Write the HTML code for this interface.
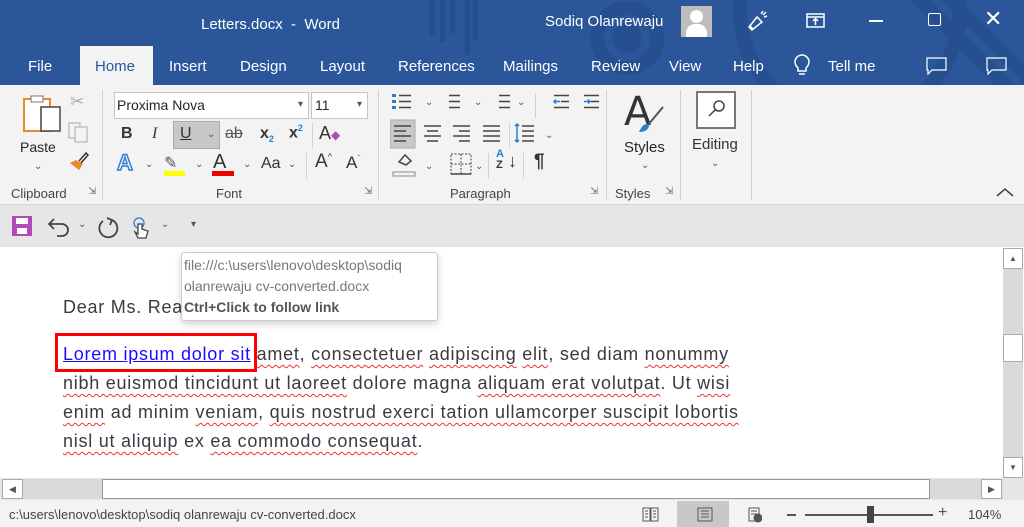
<!DOCTYPE html>
<html><head><meta charset="utf-8">
<style>
*{margin:0;padding:0;box-sizing:border-box}
body{width:1024px;height:527px;overflow:hidden;position:relative;font-family:"Liberation Sans","DejaVu Sans",sans-serif;background:#fff;color:#262626}
.a{position:absolute;white-space:nowrap}
.top{left:0;top:0;width:1024px;height:85px;background:#2b579a;overflow:hidden}
.w{color:#fff;font-size:15px}
.tab{top:58px;font-size:15px;color:#fff}
.rib{left:0;top:85px;width:1024px;height:120px;background:#f3f3f3;border-bottom:1px solid #d6d6d6}
.qat{left:0;top:205px;width:1024px;height:42px;background:#e6e6e6}
.sep{width:1px;background:#d2d2d2}
.grp{font-size:13px;color:#444;top:186px}
.ic{font-size:16px;color:#333}
.doc{font-size:18px;letter-spacing:0.75px;color:#3a3a45;font-family:"Liberation Sans",sans-serif;left:63px;line-height:29px}
.sq{text-decoration:underline wavy #e33;text-decoration-thickness:1px;text-underline-offset:4px}
.chev{font-size:10px;color:#555}
</style></head><body>
<div class="a top">
 <svg class="a" style="left:420px;top:0" width="604" height="85">
  <g fill="none" stroke="#244d8c" stroke-width="14" opacity=".7">
   <circle cx="207" cy="38" r="30"/><circle cx="207" cy="38" r="8"/>
   <circle cx="430" cy="10" r="110"/>
   <line x1="480" y1="-20" x2="590" y2="90"/><line x1="510" y1="-20" x2="620" y2="90"/>
  </g>
  <g fill="#244d8c"><rect x="10" y="0" width="5" height="35"/><rect x="20" y="0" width="5" height="42"/><rect x="30" y="0" width="5" height="33"/><rect x="45" y="0" width="5" height="55"/><rect x="53" y="0" width="5" height="40"/></g>
 </svg>
 <div class="a w" style="left:201px;top:16px">Letters.docx&nbsp; - &nbsp;Word</div>
 <div class="a w" style="left:545px;top:13px">Sodiq Olanrewaju</div>
 <div class="a" style="left:681px;top:6px;width:31px;height:31px;background:#bdbdbd;overflow:hidden"><div class="a" style="left:9px;top:4px;width:13px;height:13px;border-radius:50%;background:#fff"></div><div class="a" style="left:5px;top:18px;width:21px;height:16px;border-radius:9px 9px 0 0;background:#fff"></div></div>
 <svg class="a" style="left:745px;top:9px" width="24" height="24" fill="none" stroke="#fff" stroke-width="1.5"><path d="M4 18l8-10 5 5-10 8z M8 20l-3-3 M16 5l2-3 M19 8l3-1 M18 6l3-3"/></svg>
 <svg class="a" style="left:806px;top:13px" width="20" height="16" fill="none" stroke="#fff" stroke-width="1.5"><rect x="1" y="1" width="17" height="13"/><path d="M1 4h17 M9.5 12V6 M7 8l2.5-2.5L12 8"/></svg>
 <div class="a" style="left:869px;top:20px;width:14px;height:1.5px;background:#fff"></div>
 <div class="a" style="left:928px;top:13px;width:13px;height:13px;border:1.5px solid #fff;border-radius:2px"></div>
 <div class="a w" style="left:984px;top:6px;font-size:22px">✕</div>
 <div class="a" style="left:80px;top:46px;width:73px;height:39px;background:#f3f3f3"></div>
 <div class="a tab" style="left:28px">File</div>
 <div class="a tab" style="left:95px;color:#2b579a">Home</div>
 <div class="a tab" style="left:169px">Insert</div>
 <div class="a tab" style="left:240px">Design</div>
 <div class="a tab" style="left:320px">Layout</div>
 <div class="a tab" style="left:398px">References</div>
 <div class="a tab" style="left:503px">Mailings</div>
 <div class="a tab" style="left:591px">Review</div>
 <div class="a tab" style="left:669px">View</div>
 <div class="a tab" style="left:733px">Help</div>
 <svg class="a" style="left:793px;top:54px" width="18" height="22" fill="none" stroke="#fff" stroke-width="1.5"><path d="M5 14c-2-2-3-4-3-6a7 7 0 0114 0c0 2-1 4-3 6v3H5z M6 20h6"/></svg>
 <div class="a tab" style="left:828px">Tell me</div>
 <svg class="a" style="left:926px;top:57px" width="22" height="20" fill="none" stroke="#fff" stroke-width="1.2"><path d="M1 1h19v12H6l-4 4v-4H1z"/></svg>
 <svg class="a" style="left:986px;top:57px" width="22" height="20" fill="none" stroke="#fff" stroke-width="1.2"><path d="M1 1h19v12H6l-4 4v-4H1z"/></svg>
</div>

<div class="a rib">
 <svg class="a" style="left:22px;top:10px" width="40" height="40"><rect x="2" y="4" width="26" height="32" fill="#fff" stroke="#e8892b" stroke-width="2"/><rect x="9" y="1" width="12" height="6" fill="#fff" stroke="#777"/><rect x="19" y="12" width="19" height="24" fill="#fff" stroke="#444" stroke-width="1.5"/></svg>
 <div class="a" style="left:20px;top:54px;font-size:14px">Paste</div>
 <div class="a chev" style="left:34px;top:76px">⌄</div>
 <div class="a" style="left:70px;top:7px;font-size:17px;color:#aaa">✂</div>
 <svg class="a" style="left:68px;top:37px" width="22" height="22" fill="none" stroke="#aaa"><rect x="1" y="1" width="11" height="15"/><rect x="7" y="5" width="12" height="15" fill="#f3f3f3"/></svg>
 <svg class="a" style="left:68px;top:66px" width="22" height="22"><path d="M2 12l9 7 4-6-7-4z" fill="#e8892b"/><path d="M11 10l7-8 2 2-7 8" fill="none" stroke="#333" stroke-width="1.5"/></svg>
 <div class="a grp" style="left:11px;top:101px">Clipboard</div>
 <div class="a" style="left:88px;top:101px;font-size:10px;color:#666">⇲</div>
 <div class="a sep" style="left:102px;top:5px;height:110px"></div>
 <div class="a" style="left:114px;top:7px;width:195px;height:27px;background:#fff;border:1px solid #c6c6c6;font-size:14px;padding:4px 2px">Proxima Nova<span class="a chev" style="right:5px;top:6px">▾</span></div>
 <div class="a" style="left:311px;top:7px;width:57px;height:27px;background:#fff;border:1px solid #c6c6c6;font-size:14px;padding:4px 3px">11<span class="a chev" style="right:5px;top:6px">▾</span></div>
 <div class="a" style="left:173px;top:36px;width:47px;height:28px;background:#c8c8c8;border:1px solid #aaa"></div>
 <div class="a ic" style="left:121px;top:40px;font-weight:bold">B</div>
 <div class="a ic" style="left:152px;top:40px;font-style:italic;font-family:'Liberation Serif',serif">I</div>
 <div class="a ic" style="left:180px;top:40px;text-decoration:underline">U</div><div class="a chev" style="left:207px;top:44px">⌄</div>
 <div class="a ic" style="left:225px;top:40px;text-decoration:line-through;color:#555">ab</div>
 <div class="a ic" style="left:260px;top:40px;font-weight:bold">x<sub style="font-size:9px;color:#2b7cd3">2</sub></div>
 <div class="a ic" style="left:289px;top:38px;font-weight:bold">x<sup style="font-size:9px;color:#2b7cd3">2</sup></div>
 <div class="a sep" style="left:312px;top:38px;height:25px"></div>
 <div class="a ic" style="left:319px;top:38px;font-size:18px">A<span style="color:#b14bb8;font-size:12px">◆</span></div>
 <div class="a" style="left:117px;top:65px;font-size:22px;font-weight:bold;color:#fff;-webkit-text-stroke:1.5px #2b7cd3">A</div><div class="a chev" style="left:145px;top:74px">⌄</div>
 <div class="a" style="left:164px;top:68px;font-size:16px;color:#555">✎</div><div class="a" style="left:164px;top:86px;width:21px;height:5px;background:#ff0"></div><div class="a chev" style="left:195px;top:74px">⌄</div>
 <div class="a" style="left:213px;top:66px;font-size:20px;color:#333">A</div><div class="a" style="left:212px;top:86px;width:22px;height:5px;background:#e00"></div><div class="a chev" style="left:243px;top:74px">⌄</div>
 <div class="a ic" style="left:261px;top:70px">Aa</div><div class="a chev" style="left:288px;top:74px">⌄</div>
 <div class="a sep" style="left:306px;top:68px;height:26px"></div>
 <div class="a" style="left:315px;top:66px;font-size:19px;color:#333">A<sup style="font-size:9px">^</sup></div>
 <div class="a" style="left:346px;top:68px;font-size:17px;color:#333">A<sup style="font-size:9px;color:#2b7cd3">ˇ</sup></div>
 <div class="a grp" style="left:216px;top:101px">Font</div>
 <div class="a" style="left:364px;top:101px;font-size:10px;color:#666">⇲</div>
 <div class="a sep" style="left:378px;top:5px;height:110px"></div>
 <svg class="a" style="left:390px;top:7px" width="220" height="90" stroke="#444" stroke-width="1.5" fill="none">
  <g fill="#2b7cd3" stroke="none"><rect x="2" y="2" width="4" height="3"/><rect x="2" y="8" width="4" height="3"/><rect x="2" y="14" width="4" height="3"/></g>
  <path d="M9 3.5h12M9 9.5h12M9 15.5h12"/>
  <path d="M59 3.5h11M59 9.5h11M59 15.5h11"/>
  <path d="M109 3.5h11M109 9.5h11M109 15.5h11"/>
  <path d="M164 3.5h15M171 9.5h8M164 15.5h15M194 3.5h15M201 9.5h8M194 15.5h15"/>
  <path stroke="#2b7cd3" d="M164 9.5h6M166 7.5l-2 2 2 2M194 9.5h6M198 7.5l2 2-2 2"/>
  <rect x="0" y="28" width="25" height="28" fill="#c8c8c8" stroke="#aaa" stroke-width="1"/>
  <path d="M4 34h17M4 39h12M4 44h17M4 49h12"/>
  <path d="M34 34h17M37 39h11M34 44h17M37 49h11"/>
  <path d="M63 34h17M69 39h11M63 44h17M69 49h11"/>
  <path d="M93 34h17M93 39h17M93 44h17M93 49h17"/>
  <path d="M132 34h12M132 39h12M132 44h12M132 49h12"/><path stroke="#2b7cd3" d="M127 32v18M125 34l2-2 2 2M125 48l2 2 2-2"/>
  <path d="M9 70l6-7 6 6-5 4z"/><rect x="3" y="80" width="22" height="4" stroke="#888" stroke-width="1"/>
  <path stroke-dasharray="2 1.5" stroke-width="1" d="M61 62h20v20h-20zM71 62v20M61 72h20"/><path d="M61 82h20"/>
 </svg>
 <div class="a chev" style="left:425px;top:12px">⌄</div><div class="a chev" style="left:474px;top:12px">⌄</div><div class="a chev" style="left:517px;top:12px">⌄</div><div class="a chev" style="left:545px;top:45px">⌄</div><div class="a chev" style="left:425px;top:76px">⌄</div><div class="a chev" style="left:475px;top:76px">⌄</div>
 <div class="a sep" style="left:535px;top:8px;height:25px"></div><div class="a sep" style="left:509px;top:38px;height:25px"></div><div class="a sep" style="left:488px;top:68px;height:26px"></div><div class="a sep" style="left:523px;top:68px;height:26px"></div>
 <div class="a" style="left:496px;top:64px;font-size:11px;line-height:11px;color:#2b7cd3;font-weight:bold">A<br><span style="color:#333">Z</span></div><div class="a" style="left:508px;top:66px;font-size:18px;color:#333">↓</div>
 <div class="a" style="left:534px;top:66px;font-size:19px;font-weight:bold;color:#333">¶</div>
 <div class="a grp" style="left:450px;top:101px">Paragraph</div>
 <div class="a" style="left:590px;top:101px;font-size:10px;color:#666">⇲</div>
 <div class="a sep" style="left:606px;top:5px;height:110px"></div>
 <div class="a" style="left:624px;top:4px;font-size:40px;color:#333;font-family:'DejaVu Sans',sans-serif">A</div>
 <svg class="a" style="left:636px;top:20px" width="30" height="30"><path d="M27 2L12 20" stroke="#555" stroke-width="2"/><path d="M11 19c-4 0-6 4-8 8 4 0 9-1 10-6z" fill="#2b7cd3"/></svg>
 <div class="a" style="left:624px;top:54px;font-size:15px">Styles</div>
 <div class="a chev" style="left:641px;top:75px">⌄</div>
 <div class="a grp" style="left:615px;top:101px">Styles</div>
 <div class="a" style="left:665px;top:101px;font-size:10px;color:#666">⇲</div>
 <div class="a sep" style="left:680px;top:5px;height:110px"></div>
 <div class="a" style="left:696px;top:6px;width:40px;height:38px;background:#fff;border:2px solid #777"></div>
 <svg class="a" style="left:706px;top:13px" width="22" height="22" fill="none" stroke="#444" stroke-width="1.5"><circle cx="13" cy="8" r="5"/><path d="M9.5 11.5L3 18"/></svg>
 <div class="a" style="left:692px;top:51px;font-size:15px;color:#333">Editing</div>
 <div class="a chev" style="left:711px;top:73px">⌄</div>
 <div class="a sep" style="left:751px;top:5px;height:110px"></div>
 <svg class="a" style="left:995px;top:101px" width="20" height="12" fill="none" stroke="#444" stroke-width="1.5"><path d="M2 10l8-7 8 7"/></svg>
</div>

<div class="a qat">
 <svg class="a" style="left:11px;top:10px" width="22" height="22"><rect x="1" y="1" width="20" height="20" fill="#b14bb8"/><rect x="5" y="3" width="12" height="6" fill="#fff"/><rect x="6" y="13" width="10" height="6" fill="#fff"/></svg>
 <svg class="a" style="left:47px;top:10px" width="24" height="26" fill="none" stroke="#444" stroke-width="1.8"><path d="M3 9h12a6 6 0 010 12H10 M7 4L2 9l5 5"/></svg>
 <div class="a chev" style="left:78px;top:14px">⌄</div>
 <svg class="a" style="left:96px;top:10px" width="24" height="26" fill="none" stroke="#444" stroke-width="1.8"><path d="M16 5a9 9 0 11-9 1"/><path d="M11 3l5 2-2 5"/></svg>
 <svg class="a" style="left:132px;top:11px" width="18" height="24" fill="none" stroke="#444" stroke-width="1.3"><circle cx="7" cy="7" r="5" stroke="#2b7cd3"/><path d="M6 8v10l-3-2 3 6h8l2-7-3-1-3-1V8z" fill="#fff"/></svg>
 <div class="a chev" style="left:161px;top:14px">⌄</div>
 <div class="a chev" style="left:191px;top:14px">▾</div>
</div>

<div class="a doc" style="top:293px">Dear Ms. Rea</div>
<div class="a doc" style="top:340px"><span style="color:#1a0dff;text-decoration:underline">Lorem ipsum dolor sit</span> <span class="sq">amet</span>, <span class="sq">consectetuer</span> <span class="sq">adipiscing</span> <span class="sq">elit</span>, sed diam <span class="sq">nonummy</span><br><span class="sq">nibh euismod tincidunt ut laoreet</span> dolore magna <span class="sq">aliquam erat volutpat</span>. Ut <span class="sq">wisi</span><br><span class="sq">enim</span> ad minim <span class="sq">veniam</span>, <span class="sq">quis nostrud exerci tation ullamcorper suscipit lobortis</span><br><span class="sq">nisl ut aliquip</span> ex <span class="sq">ea commodo consequat</span>.</div>
<div class="a" style="left:55px;top:333px;width:202px;height:39px;border:3px solid #f00"></div>
<div class="a" style="left:181px;top:252px;width:257px;height:69px;background:#fff;border:1px solid #ccc;border-radius:3px;box-shadow:0 3px 8px rgba(0,0,0,.18);font-size:14px;line-height:21px;padding:2px 2px;color:#777">file:///c:\users\lenovo\desktop\sodiq<br>olanrewaju cv-converted.docx<br><b style="color:#555">Ctrl+Click to follow link</b></div>

<div class="a" style="left:1003px;top:248px;width:20px;height:230px;background:#dadada"></div>
<div class="a" style="left:1003px;top:248px;width:20px;height:21px;background:#fff;border:1px solid #aaa;font-size:8px;text-align:center;color:#555;line-height:19px">▲</div>
<div class="a" style="left:1003px;top:334px;width:20px;height:28px;background:#fff;border:1px solid #aaa"></div>
<div class="a" style="left:1003px;top:457px;width:20px;height:21px;background:#fff;border:1px solid #aaa;font-size:8px;text-align:center;color:#555;line-height:19px">▼</div>
<div class="a" style="left:0;top:478px;width:1024px;height:22px;background:#e6e6e6"></div>
<div class="a" style="left:2px;top:479px;width:21px;height:20px;background:#fff;border:1px solid #aaa;font-size:9px;text-align:center;color:#555;line-height:18px">◀</div>
<div class="a" style="left:23px;top:479px;width:980px;height:20px;background:#dadada"></div>
<div class="a" style="left:102px;top:479px;width:828px;height:20px;background:#fff;border:1px solid #999"></div>
<div class="a" style="left:981px;top:479px;width:21px;height:20px;background:#fff;border:1px solid #aaa;font-size:9px;text-align:center;color:#555;line-height:18px">▶</div>
<div class="a" style="left:0;top:500px;width:1024px;height:27px;background:#f3f3f3"></div>
<div class="a" style="left:9px;top:507px;font-size:13px;color:#444">c:\users\lenovo\desktop\sodiq olanrewaju cv-converted.docx</div>
<div class="a" style="left:677px;top:501px;width:52px;height:26px;background:#c8c8c8"></div>
<svg class="a" style="left:642px;top:507px" width="120" height="16" fill="none" stroke="#555"><path d="M1 1h7v13H1zM9 1h7v13H9zM3 4h3M3 7h3M3 10h3M11 4h3M11 7h3M11 10h3"/><path d="M56 1h14v13H56zM59 4h8M59 7h8M59 10h8"/><path d="M107 1h10v13h-10zM109 4h6M109 7h6"/><circle cx="116" cy="11" r="4" fill="#555"/></svg>
<div class="a" style="left:787px;top:514px;width:9px;height:1.5px;background:#555"></div>
<div class="a" style="left:805px;top:514px;width:128px;height:1.5px;background:#555"></div>
<div class="a" style="left:867px;top:506px;width:7px;height:17px;background:#444"></div>
<div class="a" style="left:938px;top:504px;font-size:16px;color:#555">+</div>
<div class="a" style="left:968px;top:507px;font-size:13px;color:#444">104%</div>
</body></html>
